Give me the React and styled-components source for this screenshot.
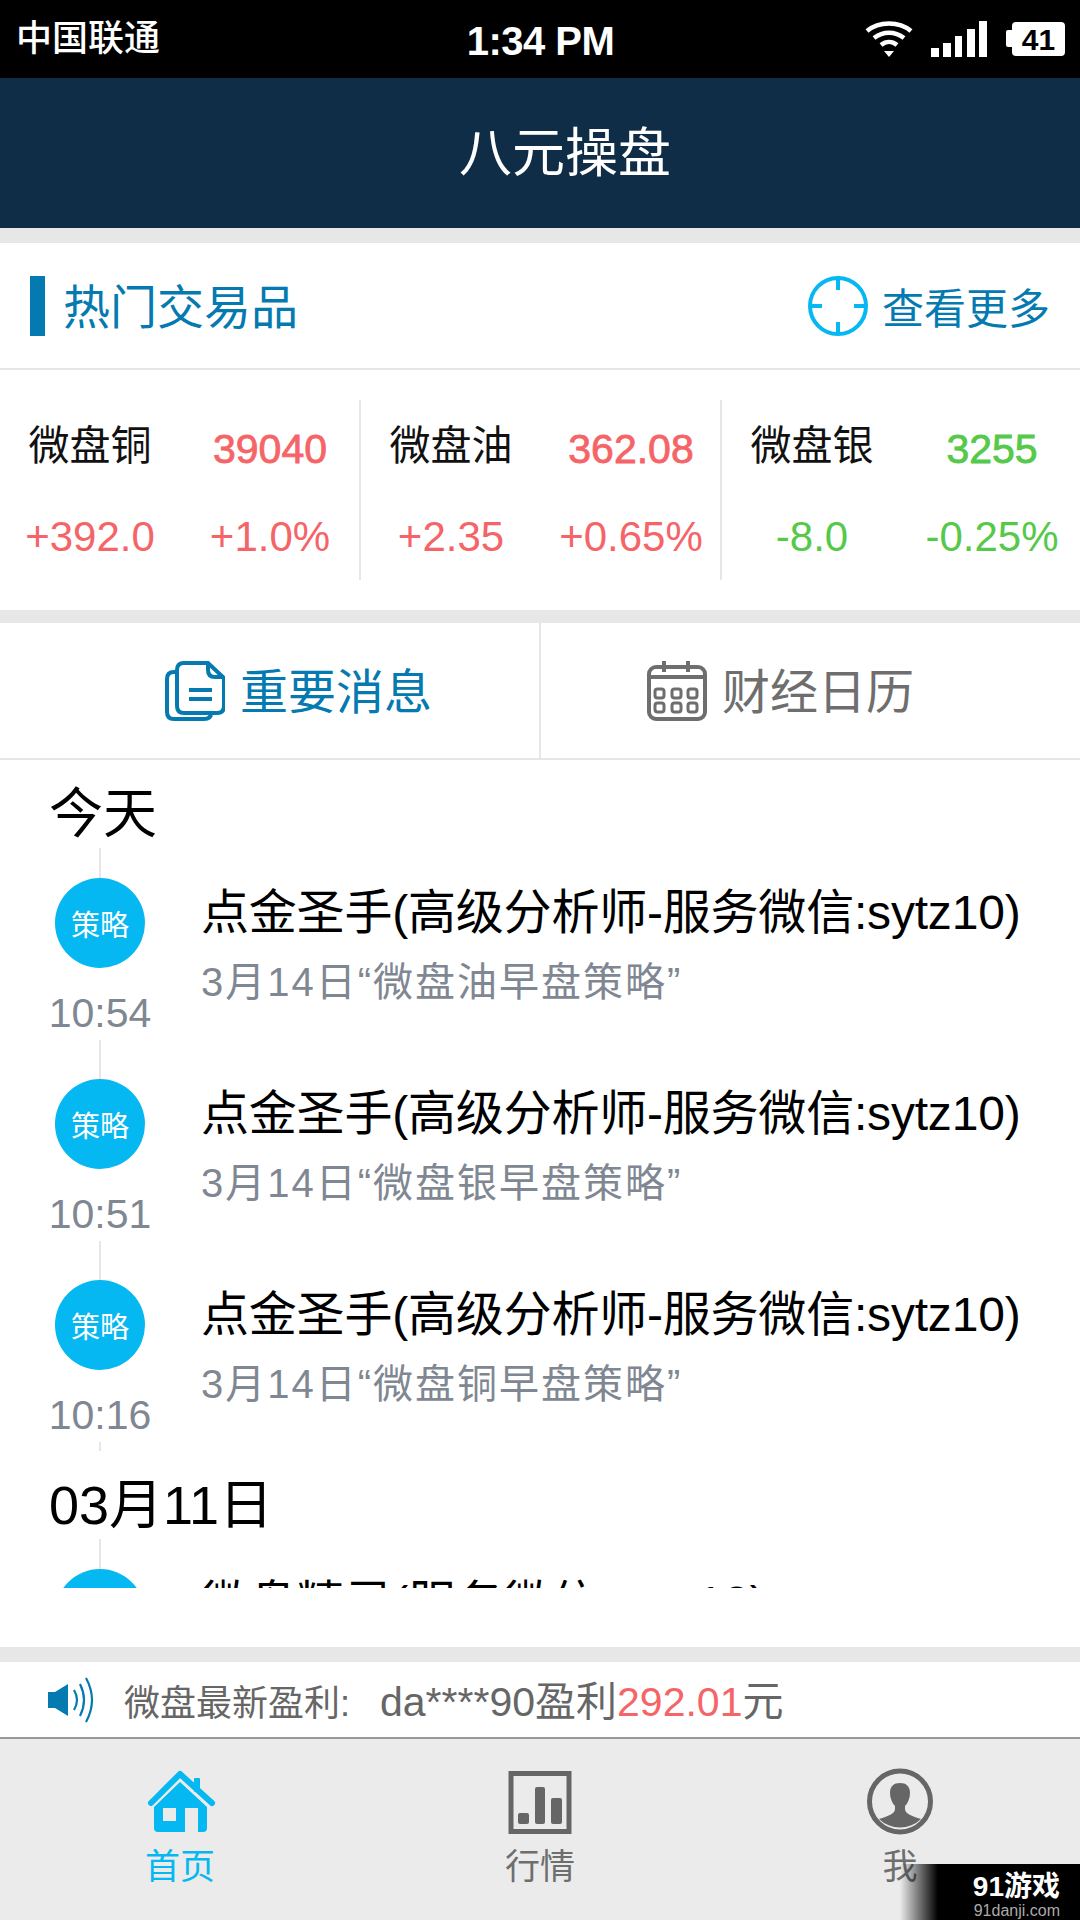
/*eslint-disable*/
import React from 'react';
import styled, { createGlobalStyle } from 'styled-components';

const BLUE = '#047ab0';
const SKY = '#05b8f1';
const RED = '#f56467';
const GREEN = '#55c94a';
const LINE = '#e6e6e6';

const GlobalStyle = createGlobalStyle`
  html, body {
    margin: 0;
    padding: 0;
    background: #fff;
  }
  body {
    font-family: "Liberation Sans", "Noto Sans CJK SC", sans-serif;
  }
  * {
    box-sizing: border-box;
  }
`;

const Page = styled.div`
  position: relative;
  width: 1080px;
  height: 1920px;
  overflow: hidden;
  display: flex;
  flex-direction: column;
  background: #e7e7e7;
`;

const StatusBar = styled.div`
  flex: none;
  height: 78px;
  padding: 0 15px 0 16px;
  background: #000;
  color: #fff;
  display: grid;
  grid-template-columns: 1fr auto 1fr;
  align-items: center;
`;

const Carrier = styled.span`
  font-size: 36px;
  font-weight: 500;
  line-height: 78px;
`;

const Clock = styled.span`
  padding-top: 4px;
  font-size: 40px;
  font-weight: 700;
  letter-spacing: -0.5px;
`;

const StatusIcons = styled.div`
  display: flex;
  justify-content: flex-end;
  align-items: center;
  gap: 18px;
`;

const Battery = styled.div`
  position: relative;
  width: 53px;
  height: 34px;
  margin-left: 6px;
  border-radius: 4px;
  background: #fff;
  color: #000;
  font-size: 30px;
  font-weight: 700;
  line-height: 35px;
  text-align: center;
  &::before {
    content: "";
    position: absolute;
    left: -6px;
    top: 8px;
    width: 6px;
    height: 17px;
    background: #fff;
    border-radius: 2px 0 0 2px;
  }
`;

const NavBar = styled.div`
  flex: none;
  height: 150px;
  padding: 0 0 8px 50px;
  background: #0f2d47;
  color: #fff;
  display: flex;
  align-items: center;
  justify-content: center;
  font-size: 53px;
  font-weight: 400;
`;

const HotSection = styled.section`
  flex: none;
  margin-top: 15px;
  background: #fff;
`;

const HotHeader = styled.div`
  height: 127px;
  padding: 0 30px;
  border-bottom: 2px solid ${LINE};
  display: flex;
  align-items: center;
  justify-content: space-between;
`;

const HotTitle = styled.h2`
  margin: 0;
  padding: 2px 0 0 18px;
  height: 60px;
  border-left: 15px solid ${BLUE};
  color: ${BLUE};
  font-size: 47px;
  font-weight: 400;
  line-height: 60px;
`;

const MoreLink = styled.div`
  display: flex;
  align-items: center;
  gap: 14px;
  color: ${BLUE};
  font-size: 42px;
  font-weight: 400;
`;

const StatsRow = styled.div`
  height: 240px;
  padding-top: 30px;
  display: grid;
  grid-template-columns: 361px 361px 358px;
  align-items: start;
`;

const StatCard = styled.div`
  height: 180px;
  display: grid;
  grid-template-columns: 180px 180px;
  grid-auto-rows: 90px;
  align-items: center;
  justify-items: center;
  border-right: ${(p) => (p.$last ? 'none' : `2px solid ${LINE}`)};
`;

const StatName = styled.span`
  margin-bottom: 6px;
  color: #111;
  font-size: 41px;
  font-weight: 400;
`;

const StatValue = styled.span`
  margin-top: ${(p) => (p.$big ? '9px' : '3px')};
  color: ${(p) => p.$color};
  font-size: ${(p) => (p.$big ? '41px' : '42px')};
  font-weight: 400;
  -webkit-text-stroke: ${(p) => (p.$big ? `0.8px ${p.$color}` : '0')};
`;

const Tabs = styled.div`
  flex: none;
  height: 137px;
  margin-top: 13px;
  background: #fff;
  border-bottom: 2px solid ${LINE};
  display: grid;
  grid-template-columns: 541px 539px;
`;

const TabCell = styled.div`
  padding-left: ${(p) => p.$pad}px;
  display: flex;
  align-items: center;
  gap: 15px;
  color: ${(p) => p.$color};
  font-size: 48px;
  font-weight: 400;
  border-right: ${(p) => (p.$divider ? `2px solid ${LINE}` : 'none')};
`;

const TabLabel = styled.span`
  padding-bottom: 6px;
`;

const ListPanel = styled.div`
  flex: none;
  height: 887px;
  background: #fff;
`;

const ListClip = styled.div`
  height: 828px;
  overflow: hidden;
`;

const DayHeading = styled.div`
  height: 88px;
  padding: 10px 0 0 49px;
  color: #000;
  font-size: 54px;
  font-weight: 400;
  line-height: 88px;
`;

const Item = styled.div`
  height: 201px;
  padding-left: 50px;
  display: flex;
`;

const TimeColumn = styled.div`
  flex: none;
  width: 100px;
  display: flex;
  flex-direction: column;
  align-items: center;
`;

const Connector = styled.div`
  flex: none;
  width: 2px;
  height: ${(p) => p.$h}px;
  background: ${LINE};
`;

const Badge = styled.div`
  flex: none;
  width: 90px;
  height: 90px;
  border-radius: 50%;
  background: ${SKY};
  color: #fff;
  font-size: 29px;
  font-weight: 400;
  display: flex;
  align-items: center;
  justify-content: center;
`;

const TimeText = styled.div`
  flex: none;
  height: 72px;
  padding-top: 21px;
  color: #7f8792;
  font-size: 41px;
  line-height: 48px;
`;

const ItemBody = styled.div`
  margin-left: 51px;
  padding-top: 35px;
  white-space: nowrap;
`;

const ItemTitle = styled.div`
  color: #000;
  font-size: 48px;
  font-weight: 400;
  letter-spacing: -0.2px;
  line-height: 60px;
`;

const ItemSub = styled.div`
  margin-top: 13px;
  color: #7f8792;
  font-size: 40px;
  font-weight: 400;
  letter-spacing: 2px;
  line-height: 52px;
`;

const Ticker = styled.div`
  flex: none;
  height: 77px;
  margin-top: 15px;
  padding-left: 48px;
  background: #fff;
  border-bottom: 2px solid #999;
  display: flex;
  align-items: center;
  color: #666;
`;

const TickerLabel = styled.span`
  margin-left: 30px;
  width: 256px;
  font-size: 36px;
  font-weight: 400;
`;

const TickerValue = styled.span`
  margin-top: -3px;
  font-size: 41px;
  font-weight: 400;
`;

const TickerMoney = styled.span`
  color: ${RED};
`;

const TabBar = styled.nav`
  flex: 1;
  padding-top: 21px;
  background: #ebebeb;
  display: grid;
  grid-template-columns: repeat(3, 1fr);
  align-items: start;
`;

const TabItem = styled.div`
  display: flex;
  flex-direction: column;
  align-items: center;
  color: ${(p) => (p.$active ? SKY : '#6e6e6e')};
  font-size: 35px;
  font-weight: 400;
  line-height: 44px;
`;

const Watermark = styled.div`
  position: absolute;
  right: 0;
  bottom: 0;
  width: 180px;
  height: 56px;
  padding: 8px 20px 0 0;
  background: linear-gradient(to right, rgba(0, 0, 0, 0) 0, #000 38px);
  color: #fff;
  text-align: right;
`;

const MarkTitle = styled.div`
  font-size: 28px;
  font-weight: 700;
  line-height: 30px;
`;

const MarkUrl = styled.div`
  color: #aaa;
  font-size: 16px;
  line-height: 18px;
`;

function WifiIcon() {
  return (
    <svg width="48" height="38" viewBox="0 0 48 38" fill="none" stroke="#fff" strokeWidth="4.5">
      <path d="M2 11 C14 1 34 1 46 11" />
      <path d="M9 18 C18 11 30 11 39 18" />
      <path d="M16 25 C21 21 27 21 32 25" />
      <path d="M19 31 L29 31 L24 37 Z" fill="#fff" stroke="none" />
    </svg>
  );
}

function SignalIcon() {
  return (
    <svg width="57" height="37" viewBox="0 0 57 37" fill="#fff">
      <rect x="0" y="27" width="8" height="9" />
      <rect x="12" y="22" width="8" height="14" />
      <rect x="24" y="15" width="7" height="21" />
      <rect x="36" y="8" width="8" height="28" />
      <rect x="48" y="0" width="8" height="36" />
    </svg>
  );
}

function TargetIcon() {
  return (
    <svg width="60" height="60" viewBox="0 0 60 60" fill="none" stroke={SKY} strokeWidth="4">
      <circle cx="30" cy="30" r="28" />
      <path d="M30 2 V14 M30 46 V58 M2 30 H14 M46 30 H58" />
    </svg>
  );
}

function DocsIcon() {
  return (
    <svg width="60" height="60" viewBox="15 9 60 60" fill="none" stroke={BLUE} strokeWidth="4">
      <path d="M27 20 H24 Q17 20 17 27 V60 Q17 67 24 67 H54 Q61 67 61 61" />
      <path d="M58 11 H34 Q27 11 27 18 V54 Q27 61 34 61 H67 Q74 61 74 54 V26 Z" />
      <path d="M58 11 V18 Q58 25 65 25 H74" />
      <path d="M39 38 H62 M39 47 H62" />
    </svg>
  );
}

function CalendarIcon() {
  const cells = [25, 42, 58].flatMap((x) => [42, 56].map((y) => [x, y]));
  return (
    <svg width="60" height="62" viewBox="13 9 60 62" fill="none" stroke="#6e6e6e" strokeWidth="4">
      <rect x="15" y="16" width="56" height="52" rx="7" />
      <path d="M15 26 H71 M30 10 V21 M54 10 V21" />
      {cells.map(([x, y]) => (
        <rect key={`${x}-${y}`} x={x - 4} y={y - 4} width="9" height="9" rx="2.5" strokeWidth="3" />
      ))}
    </svg>
  );
}

function SpeakerIcon() {
  return (
    <svg width="46" height="46" viewBox="0 0 46 46" fill="none" stroke={BLUE} strokeWidth="2.2">
      <path d="M0 15 H7 L20 7 V39 L7 31 H0 Z" fill={BLUE} stroke="none" />
      <path d="M26 13 Q32 23 26 33" />
      <path d="M32 7 Q40 23 32 39" />
      <path d="M38 1 Q50 23 38 45" />
    </svg>
  );
}

function HomeIcon() {
  return (
    <svg width="100" height="85" viewBox="0 0 100 85">
      <path d="M21 43 L50 14 L82 43" fill="none" stroke={SKY} strokeWidth="6" strokeLinecap="round" strokeLinejoin="round" />
      <rect x="64" y="18" width="6" height="14" rx="1" fill={SKY} />
      <path
        fillRule="evenodd"
        fill={SKY}
        d="M50 22 L77 47 V68 Q77 72 73 72 H68 V48 H55 V72 H28 Q24 72 24 68 V47 Z M33 48 V61 H46 V48 Z"
      />
    </svg>
  );
}

function ChartIcon() {
  return (
    <svg width="100" height="85" viewBox="0 0 100 85" fill="#666">
      <rect x="21" y="13.5" width="58" height="58" fill="none" stroke="#666" strokeWidth="5" />
      <rect x="28" y="53" width="11" height="11" rx="2" />
      <rect x="45" y="27" width="10" height="37" rx="2" />
      <rect x="61" y="38" width="11" height="26" rx="2" />
    </svg>
  );
}

function PersonIcon() {
  return (
    <svg width="100" height="85" viewBox="0 0 100 85" fill="#666">
      <circle cx="50" cy="41.5" r="30.5" fill="none" stroke="#666" strokeWidth="5" />
      <path d="M29 59 C38 56 45 54 45 49 V46 C42 43 40 38 40 33 C40 26 44 23 50 23 C56 23 60 26 60 33 C60 38 58 43 55 46 V49 C55 54 62 56 71 59 A30 30 0 0 1 29 59 Z" />
    </svg>
  );
}

const stats = [
  { name: '微盘铜', price: '39040', change: '+392.0', pct: '+1.0%', color: RED },
  { name: '微盘油', price: '362.08', change: '+2.35', pct: '+0.65%', color: RED },
  { name: '微盘银', price: '3255', change: '-8.0', pct: '-0.25%', color: GREEN },
];

// the last row runs under the clip, only its top shows
const days = [
  {
    label: '今天',
    items: [
      { time: '10:54', title: '点金圣手(高级分析师-服务微信:sytz10)', sub: '3月14日“微盘油早盘策略”' },
      { time: '10:51', title: '点金圣手(高级分析师-服务微信:sytz10)', sub: '3月14日“微盘银早盘策略”' },
      { time: '10:16', title: '点金圣手(高级分析师-服务微信:sytz10)', sub: '3月14日“微盘铜早盘策略”' },
    ],
  },
  {
    label: '03月11日',
    items: [{ title: '微盘精灵(服务微信:sytz10)' }],
  },
];

export default function App() {
  return (
    <Page>
      <GlobalStyle />
      <StatusBar>
        <Carrier>中国联通</Carrier>
        <Clock>1:34 PM</Clock>
        <StatusIcons>
          <WifiIcon />
          <SignalIcon />
          <Battery>41</Battery>
        </StatusIcons>
      </StatusBar>
      <NavBar>八元操盘</NavBar>

      <HotSection>
        <HotHeader>
          <HotTitle>热门交易品</HotTitle>
          <MoreLink>
            <TargetIcon />
            查看更多
          </MoreLink>
        </HotHeader>
        <StatsRow>
          {stats.map((s, i) => (
            <StatCard key={s.name} $last={i === stats.length - 1}>
              <StatName>{s.name}</StatName>
              <StatValue $big $color={s.color}>{s.price}</StatValue>
              <StatValue $color={s.color}>{s.change}</StatValue>
              <StatValue $color={s.color}>{s.pct}</StatValue>
            </StatCard>
          ))}
        </StatsRow>
      </HotSection>

      <Tabs>
        <TabCell $pad={165} $color={BLUE} $divider>
          <DocsIcon />
          <TabLabel>重要消息</TabLabel>
        </TabCell>
        <TabCell $pad={106} $color="#6e6e6e">
          <CalendarIcon />
          <TabLabel>财经日历</TabLabel>
        </TabCell>
      </Tabs>

      <ListPanel>
        <ListClip>
          {days.map((day) => (
            <div key={day.label}>
              <DayHeading>{day.label}</DayHeading>
              {day.items.map((item, i) => (
                <Item key={i}>
                  <TimeColumn>
                    <Connector $h={30} />
                    <Badge>{item.time && '策略'}</Badge>
                    {item.time && <TimeText>{item.time}</TimeText>}
                    <Connector $h={9} />
                  </TimeColumn>
                  <ItemBody>
                    <ItemTitle>{item.title}</ItemTitle>
                    {item.sub && <ItemSub>{item.sub}</ItemSub>}
                  </ItemBody>
                </Item>
              ))}
            </div>
          ))}
        </ListClip>
      </ListPanel>

      <Ticker>
        <SpeakerIcon />
        <TickerLabel>微盘最新盈利:</TickerLabel>
        <TickerValue>
          da****90盈利<TickerMoney>292.01</TickerMoney>元
        </TickerValue>
      </Ticker>

      <TabBar>
        <TabItem $active>
          <HomeIcon />
          首页
        </TabItem>
        <TabItem>
          <ChartIcon />
          行情
        </TabItem>
        <TabItem>
          <PersonIcon />
          我
        </TabItem>
      </TabBar>

      <Watermark>
        <MarkTitle>91游戏</MarkTitle>
        <MarkUrl>91danji.com</MarkUrl>
      </Watermark>
    </Page>
  );
}
